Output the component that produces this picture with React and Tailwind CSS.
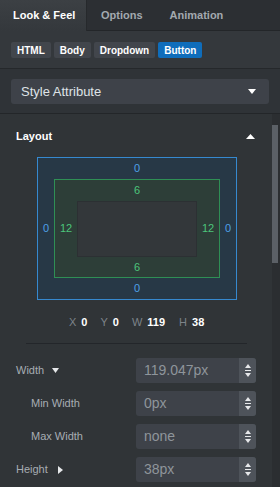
import React from "react";

const Caret = ({ dir = "down", className = "" }) => {
  const d =
    dir === "down" ? "M0 0 L10 0 L5 6 Z" : dir === "up" ? "M0 6 L10 6 L5 0 Z" : "M0 0 L6 5 L0 10 Z";
  const vb = dir === "right" ? "0 0 6 10" : "0 0 10 6";
  return (
    <svg viewBox={vb} className={className} fill="currentColor" preserveAspectRatio="none">
      <path d={d} />
    </svg>
  );
};

const Stepper = () => (
  <div className="w-[17px] h-full bg-[#4e535a] rounded-r-[3px] flex flex-col items-center justify-center gap-[2px]">
    <svg viewBox="0 0 6 4" className="w-[6px] h-[4px]" fill="#e6e8ea"><path d="M0 4 L6 4 L3 0 Z" /></svg>
    <div className="w-[6px] h-[1px] bg-[#e6e8ea]" />
    <svg viewBox="0 0 6 4" className="w-[6px] h-[4px]" fill="#e6e8ea"><path d="M0 0 L6 0 L3 4 Z" /></svg>
  </div>
);

const Field = ({ value }) => (
  <div className="w-[120px] h-[25px] bg-[#3e4249] rounded-[3px] flex">
    <div className="flex-1 pl-[8px] flex items-center text-[14px] text-[#8f959b]">{value}</div>
    <Stepper />
  </div>
);

const Pill = ({ children, active }) => (
  <div
    className={`h-[16px] px-[6px] rounded-[2px] text-[10px] font-bold text-white flex items-center ${
      active ? "bg-[#0f6dbb]" : "bg-[#42464c]"
    }`}
  >
    {children}
  </div>
);

export default function App() {
  return (
    <div
      className="w-[280px] h-[487px] overflow-hidden bg-[#303437] relative"
      style={{ fontFamily: '"Liberation Sans", Arial, sans-serif' }}
    >
      {/* Tabs */}
      <div className="h-[31px] flex bg-[#2c2f33]">
        <div className="w-[87px] h-[31px] bg-gradient-to-b from-[#3c4044] to-[#34383c] border-r border-[#26292c] flex items-center pl-[13px] text-[11px] font-bold text-white">
          Look &amp; Feel
        </div>
        <div className="flex-1 border-b border-[#232629] flex items-center text-[11px] font-bold text-[#a3a9af]">
          <span className="ml-[14px]">Options</span>
          <span className="ml-[27px]">Animation</span>
        </div>
      </div>
      {/* Pills */}
      <div className="h-[38px] bg-[#34383c] border-b border-[#25282b] flex items-start pt-[11px] pl-[11px] gap-[3px]">
        <Pill>HTML</Pill>
        <Pill>Body</Pill>
        <Pill>Dropdown</Pill>
        <Pill active>Button</Pill>
      </div>
      {/* Style attribute dropdown */}
      <div className="h-[45px] bg-[#2f3337] border-b border-[#232629] px-[11px] pt-[10px]">
        <div className="h-[25px] bg-[#3e4249] rounded-[3px] flex items-center justify-between pl-[10px] pr-[13px]">
          <span className="text-[13px] text-[#dfe3e7]">Style Attribute</span>
          <Caret dir="down" className="w-[8px] h-[5px] text-white" />
        </div>
      </div>
      {/* Content */}
      <div className="flex">
        <div className="w-[272px]">
          <div className="h-[43px] flex items-center justify-between pl-[16px] pr-[17px] pt-[1px]">
            <span className="text-[11px] font-bold text-white">Layout</span>
            <Caret dir="up" className="w-[9px] h-[5px] text-white" />
          </div>
          {/* Box model */}
          <div className="ml-[37px] w-[200px] h-[143px] border border-[#3689cf] bg-[#273846] flex flex-col items-center text-[11px] text-[#4ea0e6]">
            <div className="h-[21px] flex items-center">0</div>
            <div className="w-full flex items-center flex-1">
              <div className="w-[16px] text-center">0</div>
              <div className="w-[166px] h-[99px] border border-[#2f8f55] bg-[#2d3e38] flex flex-col items-center text-[#4cc57b]">
                <div className="h-[21px] flex items-center">6</div>
                <div className="w-full flex items-center flex-1">
                  <div className="w-[22px] text-center">12</div>
                  <div className="w-[120px] h-[56px] bg-[#33373a] border border-[#2c3033]" />
                  <div className="flex-1 text-center">12</div>
                </div>
                <div className="h-[21px] flex items-center">6</div>
              </div>
              <div className="flex-1 text-center">0</div>
            </div>
            <div className="h-[21px] flex items-center">0</div>
          </div>
          {/* XYWH */}
          <div className="h-[43px] flex items-center pl-[69px] pt-[2px] text-[11px]">
            <span className="text-[#7d8389]">X</span>
            <span className="ml-[5px] font-bold text-white">0</span>
            <span className="ml-[13px] text-[#7d8389]">Y</span>
            <span className="ml-[5px] font-bold text-white">0</span>
            <span className="ml-[13px] text-[#7d8389]">W</span>
            <span className="ml-[5px] font-bold text-white">119</span>
            <span className="ml-[14px] text-[#7d8389]">H</span>
            <span className="ml-[5px] font-bold text-white">38</span>
          </div>
          <div className="ml-[26px] w-[221px] h-[1px] bg-[#23262a]" />
          {/* Rows */}
          <div className="flex flex-col gap-[8px] pt-[14px] pr-[16px]">
            <div className="flex items-center justify-between">
              <div className="pl-[16px] flex items-center text-[11px] text-[#a7adb3]">
                Width
                <Caret dir="down" className="w-[7px] h-[5px] ml-[8px] text-[#e6e8ea]" />
              </div>
              <Field value="119.047px" />
            </div>
            <div className="flex items-center justify-between">
              <div className="pl-[31px] text-[11px] text-[#a7adb3]">Min Width</div>
              <Field value="0px" />
            </div>
            <div className="flex items-center justify-between">
              <div className="pl-[31px] text-[11px] text-[#a7adb3]">Max Width</div>
              <Field value="none" />
            </div>
            <div className="flex items-center justify-between">
              <div className="pl-[16px] flex items-center text-[11px] text-[#a7adb3]">
                Height
                <Caret dir="right" className="w-[5px] h-[8px] ml-[10px] text-[#e6e8ea]" />
              </div>
              <Field value="38px" />
            </div>
          </div>
        </div>
        {/* Scrollbar */}
        <div className="w-[8px] h-[373px] bg-[#2b2e31] pt-[11px]">
          <div className="w-[6px] h-[138px] bg-[#5b6066]" />
        </div>
      </div>
    </div>
  );
}
